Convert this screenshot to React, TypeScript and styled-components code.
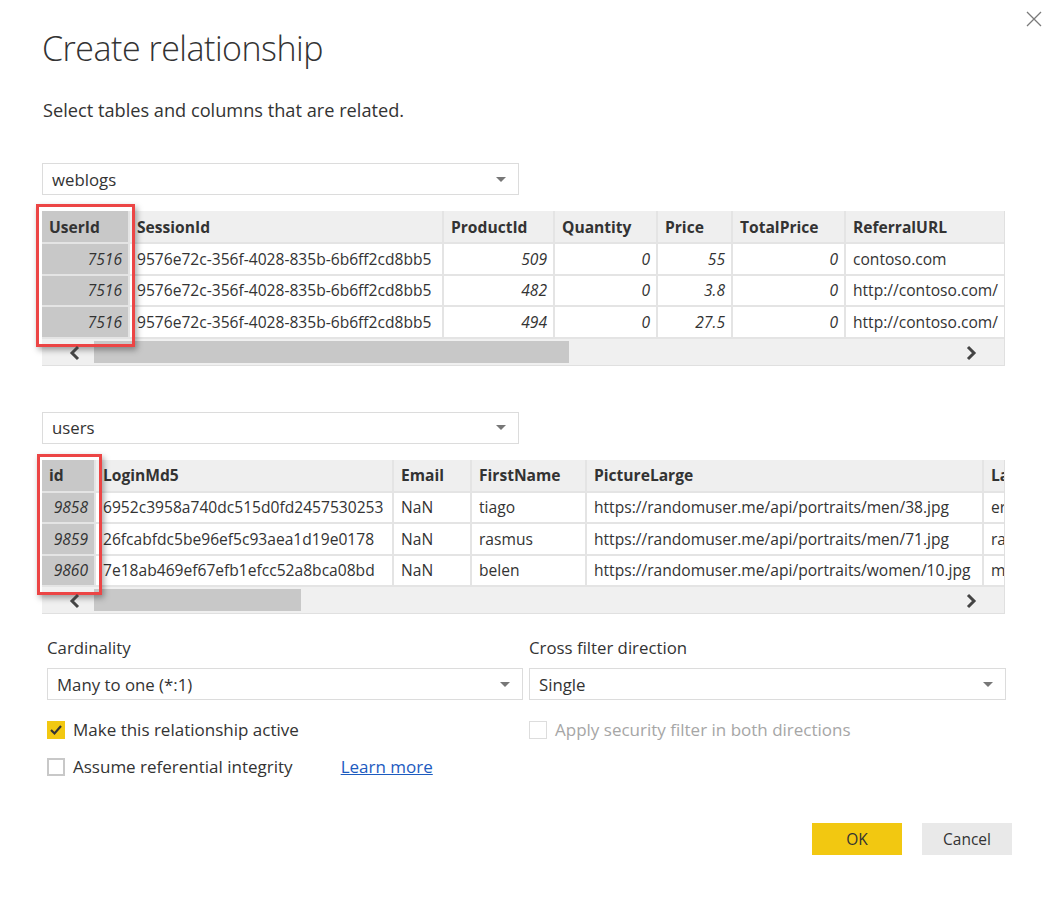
import React from "react";
import styled, { createGlobalStyle } from "styled-components";

const Global = createGlobalStyle`
  html, body { margin: 0; padding: 0; background: #ffffff; }
  body { font-family: "Open Sans", "Noto Sans", sans-serif; color: #333; }
  * { box-sizing: border-box; }
`;

const Dialog = styled.div`
  width: 1054px;
  height: 898px;
  padding: 0 48px 0 42px;
  display: flex;
  flex-direction: column;
`;

const Header = styled.div`
  display: flex;
  justify-content: space-between;
  align-items: flex-start;
  margin-right: -36px;
`;

const Title = styled.h1`
  margin: 26px 0 0 0;
  font-size: 34px;
  font-weight: 300;
  color: #333;
  letter-spacing: -0.5px;
  line-height: 44px;
`;

const CloseButton = styled.div`
  width: 16px;
  height: 16px;
  margin-top: 10px;
  color: #777;
`;

const Subtitle = styled.p`
  margin: 28px 0 0 1px;
  font-size: 18.2px;
  color: #333;
  line-height: 24px;
`;

const Select = styled.div<{ $w: number; $mt: number }>`
  width: ${(p) => p.$w}px;
  height: 32px;
  margin-top: ${(p) => p.$mt}px;
  border: 1px solid #dcdcdc;
  display: flex;
  align-items: center;
  justify-content: space-between;
  padding: 0 12px 0 9px;
  font-size: 16.8px;
  color: #333;
`;

const Caret = styled.span`
  width: 0;
  height: 0;
  border-left: 5px solid transparent;
  border-right: 5px solid transparent;
  border-top: 5px solid #777;
`;

const TableBlock = styled.div`
  position: relative;
  margin-top: 16px;
  width: 963px;
`;

const TableClip = styled.div`
  overflow: hidden;
  border: 1px solid #e0e0e0;
  border-top: none;
  border-left: none;
`;

const Grid = styled.table`
  border-collapse: collapse;
  table-layout: fixed;
  font-size: 15.6px;
`;

const Th = styled.th<{ $sel?: boolean }>`
  height: 32px;
  padding: 0 7px;
  text-align: left;
  font-weight: 700;
  color: #333;
  white-space: nowrap;
  overflow: hidden;
  background: ${(p) => (p.$sel ? "#c8c8c8" : "#efefef")};
  border: 2px solid #e4e4e4;
  border-top: none;
  border-left: none;
`;

const Td = styled.td<{ $sel?: boolean; $num?: boolean }>`
  height: 31.5px;
  padding: 0 ${(p) => (p.$num ? "6px" : "7px")};
  white-space: nowrap;
  overflow: hidden;
  color: #333;
  text-align: ${(p) => (p.$num ? "right" : "left")};
  font-style: ${(p) => (p.$num ? "italic" : "normal")};
  background: ${(p) => (p.$sel ? "#c8c8c8" : "#ffffff")};
  border: 2px solid #e4e4e4;
  border-left: none;
`;

const ScrollRow = styled.div`
  height: 26px;
  background: #f0f0f0;
  display: flex;
  align-items: center;
  position: relative;
`;

const Thumb = styled.div<{ $w: number }>`
  position: absolute;
  left: 52px;
  top: 2px;
  height: 22px;
  width: ${(p) => p.$w}px;
  background: #c8c8c8;
`;

const Arrow = styled.div<{ $side: "left" | "right" }>`
  position: absolute;
  top: 5px;
  ${(p) => (p.$side === "left" ? "left: 26px;" : "right: 26px;")}
  width: 14px;
  height: 16px;
  z-index: 1;
`;

const Highlight = styled.div<{ $l: number; $t: number; $w: number; $h: number }>`
  position: absolute;
  left: ${(p) => p.$l}px;
  top: ${(p) => p.$t}px;
  width: ${(p) => p.$w}px;
  height: ${(p) => p.$h}px;
  border: 3px solid #ec4545;
  box-shadow: 2px 3px 6px rgba(0, 0, 0, 0.35);
  pointer-events: none;
`;

const Options = styled.div`
  margin-top: 22px;
  margin-left: 5px;
  display: grid;
  grid-template-columns: 476px 477px;
  column-gap: 6px;
`;

const Column = styled.div`
  display: flex;
  flex-direction: column;
`;

const Label = styled.div`
  font-size: 16.8px;
  line-height: 24px;
  color: #333;
`;

const Check = styled.label<{ $disabled?: boolean; $mt: number }>`
  display: flex;
  align-items: center;
  margin-top: ${(p) => p.$mt}px;
  font-size: 17px;
  line-height: 24px;
  color: ${(p) => (p.$disabled ? "#a6a6a6" : "#333")};
`;

const Box = styled.span<{ $checked?: boolean; $disabled?: boolean }>`
  width: 18px;
  height: 18px;
  margin-right: 8px;
  display: inline-flex;
  align-items: center;
  justify-content: center;
  background: ${(p) => (p.$checked ? "#f2c811" : "#fff")};
  border: ${(p) =>
    p.$checked ? "none" : p.$disabled ? "1px solid #dddddd" : "2px solid #c8c8c8"};
`;

const LearnMore = styled.a`
  margin-left: 48px;
  color: #1d5bbf;
  text-decoration: underline;
`;

const Buttons = styled.div`
  display: flex;
  justify-content: flex-end;
  gap: 20px;
  margin-top: 44px;
  margin-right: -6px;
`;

const Button = styled.button<{ $primary?: boolean }>`
  width: 90px;
  height: 32px;
  border: none;
  font-family: inherit;
  font-size: 15.5px;
  color: #333;
  background: ${(p) => (p.$primary ? "#f2c811" : "#e9e9e9")};
`;

const Chevron = ({ dir }: { dir: "left" | "right" }) => (
  <svg width="14" height="16" viewBox="0 0 14 16">
    <polyline
      points={dir === "left" ? "10,2 4,8 10,14" : "4,2 10,8 4,14"}
      fill="none"
      stroke="#444"
      strokeWidth="3"
    />
  </svg>
);

type Col = { name: string; w: number; num?: boolean; sel?: boolean };

const DataTable = ({
  cols,
  rows,
  thumb,
}: {
  cols: Col[];
  rows: string[][];
  thumb: number;
}) => (
  <TableClip>
    <Grid style={{ width: cols.reduce((a, c) => a + c.w, 0) }}>
      <colgroup>
        {cols.map((c) => (
          <col key={c.name} style={{ width: c.w }} />
        ))}
      </colgroup>
      <thead>
        <tr>
          {cols.map((c) => (
            <Th key={c.name} $sel={c.sel}>
              {c.name}
            </Th>
          ))}
        </tr>
      </thead>
      <tbody>
        {rows.map((r, i) => (
          <tr key={i}>
            {r.map((v, j) => (
              <Td key={j} $num={cols[j].num} $sel={cols[j].sel}>
                {v}
              </Td>
            ))}
          </tr>
        ))}
      </tbody>
    </Grid>
    <ScrollRow>
      <Arrow $side="left">
        <Chevron dir="left" />
      </Arrow>
      <Thumb $w={thumb} />
      <Arrow $side="right">
        <Chevron dir="right" />
      </Arrow>
    </ScrollRow>
  </TableClip>
);

const weblogCols: Col[] = [
  { name: "UserId", w: 87, num: true, sel: true },
  { name: "SessionId", w: 314 },
  { name: "ProductId", w: 111, num: true },
  { name: "Quantity", w: 103, num: true },
  { name: "Price", w: 75, num: true },
  { name: "TotalPrice", w: 113, num: true },
  { name: "ReferralURL", w: 180 },
];

const weblogRows = [
  ["7516", "9576e72c-356f-4028-835b-6b6ff2cd8bb5", "509", "0", "55", "0", "contoso.com"],
  ["7516", "9576e72c-356f-4028-835b-6b6ff2cd8bb5", "482", "0", "3.8", "0", "http://contoso.com/"],
  ["7516", "9576e72c-356f-4028-835b-6b6ff2cd8bb5", "494", "0", "27.5", "0", "http://contoso.com/"],
];

const userCols: Col[] = [
  { name: "id", w: 53, num: true, sel: true },
  { name: "LoginMd5", w: 298 },
  { name: "Email", w: 78 },
  { name: "FirstName", w: 115 },
  { name: "PictureLarge", w: 397 },
  { name: "LastName", w: 120 },
];

const userRows = [
  ["9858", "6952c3958a740dc515d0fd2457530253", "NaN", "tiago", "https://randomuser.me/api/portraits/men/38.jpg", "eriksen"],
  ["9859", "26fcabfdc5be96ef5c93aea1d19e0178", "NaN", "rasmus", "https://randomuser.me/api/portraits/men/71.jpg", "rasmussen"],
  ["9860", "7e18ab469ef67efb1efcc52a8bca08bd", "NaN", "belen", "https://randomuser.me/api/portraits/women/10.jpg", "moreno"],
];

export default function App() {
  return (
    <>
      <Global />
      <Dialog>
        <Header>
          <Title>Create relationship</Title>
          <CloseButton>
            <svg width="16" height="16" viewBox="0 0 16 16">
              <path d="M1 1 L15 15 M15 1 L1 15" stroke="#7a7a7a" strokeWidth="1.3" />
            </svg>
          </CloseButton>
        </Header>
        <Subtitle>Select tables and columns that are related.</Subtitle>

        <Select $w={477} $mt={41}>
          <span>weblogs</span>
          <Caret />
        </Select>
        <TableBlock>
          <DataTable cols={weblogCols} rows={weblogRows} thumb={475} />
          <Highlight $l={-6} $t={-7} $w={99} $h={143} />
        </TableBlock>

        <Select $w={477} $mt={46}>
          <span>users</span>
          <Caret />
        </Select>
        <TableBlock>
          <DataTable cols={userCols} rows={userRows} thumb={207} />
          <Highlight $l={-5} $t={-6} $w={65} $h={141} />
        </TableBlock>

        <Options>
          <Column>
            <Label>Cardinality</Label>
            <Select $w={476} $mt={8}>
              <span>Many to one (*:1)</span>
              <Caret />
            </Select>
            <Check $mt={18}>
              <Box $checked>
                <svg width="14" height="12" viewBox="0 0 14 12">
                  <polyline points="2,6 5.5,9.5 12,2" fill="none" stroke="#333" strokeWidth="2.2" />
                </svg>
              </Box>
              Make this relationship active
            </Check>
            <Check $mt={13}>
              <Box />
              Assume referential integrity
              <LearnMore href="#">Learn more</LearnMore>
            </Check>
          </Column>
          <Column>
            <Label>Cross filter direction</Label>
            <Select $w={477} $mt={8}>
              <span>Single</span>
              <Caret />
            </Select>
            <Check $mt={18} $disabled>
              <Box $disabled />
              Apply security filter in both directions
            </Check>
          </Column>
        </Options>

        <Buttons>
          <Button $primary>OK</Button>
          <Button>Cancel</Button>
        </Buttons>
      </Dialog>
    </>
  );
}
